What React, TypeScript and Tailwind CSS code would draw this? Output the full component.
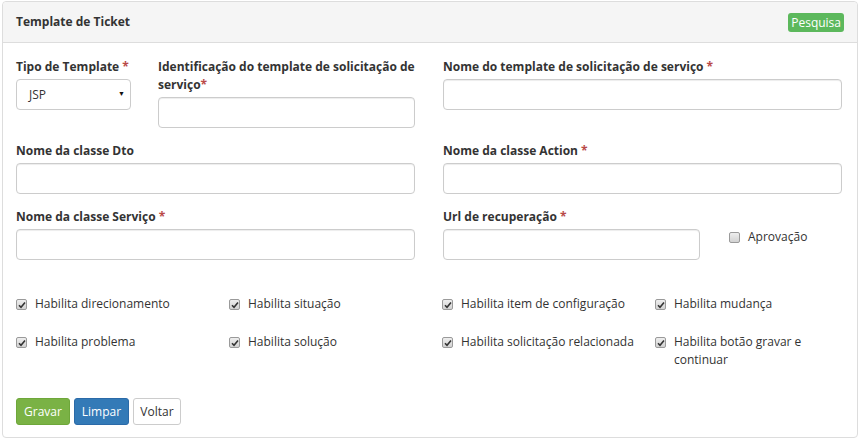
import React from "react";

const Req = () => <span className="text-[#b94a48]">*</span>;

function Label({ children }: { children: React.ReactNode }) {
  return (
    <label className="block font-bold text-[12px] leading-[18px] text-[#333] mb-[3px]">
      {children}
    </label>
  );
}

function TextInput({ className = "" }: { className?: string }) {
  return (
    <input
      type="text"
      className={`block h-[31px] w-full rounded-[4px] border border-[#ccc] bg-white px-3 text-[12px] shadow-[inset_0_1px_1px_rgba(0,0,0,0.075)] outline-none ${className}`}
    />
  );
}

function Check({
  checked = true,
  label,
  nowrap = false,
}: {
  checked?: boolean;
  label: string;
  nowrap?: boolean;
}) {
  return (
    <div className="flex items-start gap-[8px]">
      <span className="mt-[4px] flex h-[11px] w-[11px] shrink-0 items-center justify-center rounded-[2px] border border-[#9a9a9a] bg-gradient-to-b from-[#eeeeee] to-[#d2d2d2]">
        {checked && (
          <svg width="8" height="8" viewBox="0 0 8 8">
            <path d="M1 4.2 L3 6.2 L7 1.5" fill="none" stroke="#333" strokeWidth="1.6" />
          </svg>
        )}
      </span>
      <span className={`text-[12px] leading-[18px] text-[#333] ${nowrap ? "whitespace-nowrap" : ""}`}>
        {label}
      </span>
    </div>
  );
}

export default function App() {
  return (
    <div className="w-[861px] h-[439px] bg-white pt-[1px] pl-[2px] pr-[3px] font-['Open_Sans',sans-serif]">
      <div className="rounded-[4px] border border-[#ddd] bg-white h-[437px]">
        <div className="flex h-[41px] items-center justify-between border-b border-[#ddd] bg-[#f5f5f5] rounded-t-[4px] pl-[13px] pr-[13px]">
          <span className="font-bold text-[12px] text-[#333]">Template de Ticket</span>
          <button className="h-[19px] rounded-[3px] bg-[#5cb85c] px-[3px] text-[12px] leading-[19px] text-white">
            Pesquisa
          </button>
        </div>

        <div className="px-[13px] pt-[15px]">
          <div className="grid grid-cols-[399px_399px] gap-x-[28px]">
            <div className="flex gap-[27px]">
              <div className="w-[115px] shrink-0">
                <Label>
                  Tipo de Template <Req />
                </Label>
                <div className="relative flex h-[31px] items-center rounded-[4px] border border-[#ccc] bg-white pl-[12px] text-[12px] text-[#333]">
                  JSP
                  <span className="absolute right-[5px] top-[9px] text-[7px] text-[#111]">▼</span>
                </div>
              </div>
              <div className="flex-1">
                <Label>
                  Identificação do template de solicitação de serviço<Req />
                </Label>
                <TextInput />
              </div>
            </div>
            <div>
              <Label>
                Nome do template de solicitação de serviço <Req />
              </Label>
              <TextInput />
            </div>
          </div>

          <div className="mt-[14px] grid grid-cols-[399px_399px] gap-x-[28px]">
            <div>
              <Label>Nome da classe Dto</Label>
              <TextInput />
            </div>
            <div>
              <Label>
                Nome da classe Action <Req />
              </Label>
              <TextInput />
            </div>
          </div>

          <div className="mt-[14px] grid grid-cols-[399px_399px] gap-x-[28px]">
            <div>
              <Label>
                Nome da classe Serviço <Req />
              </Label>
              <TextInput />
            </div>
            <div className="flex">
              <div className="w-[257px]">
                <Label>
                  Url de recuperação <Req />
                </Label>
                <TextInput />
              </div>
              <div className="ml-[29px] mt-[20px]">
                <Check checked={false} label="Aprovação" />
              </div>
            </div>
          </div>

          <div className="mt-[35px] grid grid-cols-[184px_184px_184px_184px] gap-x-[29px] gap-y-[20px]">
            <Check label="Habilita direcionamento" />
            <Check label="Habilita situação" />
            <Check label="Habilita item de configuração" nowrap />
            <Check label="Habilita mudança" />
            <Check label="Habilita problema" />
            <Check label="Habilita solução" />
            <Check label="Habilita solicitação relacionada" nowrap />
            <Check label="Habilita botão gravar e continuar" />
          </div>

          <div className="mt-[29px] flex gap-[4px]">
            <button className="h-[27px] w-[54px] rounded-[3px] border border-[#6ea73a] bg-[#7ab245] text-[12px] text-white">
              Gravar
            </button>
            <button className="h-[27px] w-[55px] rounded-[3px] border border-[#2b6aa8] bg-[#337ab7] text-[12px] text-white">
              Limpar
            </button>
            <button className="h-[27px] w-[48px] rounded-[3px] border border-[#ccc] bg-white text-[12px] text-[#333]">
              Voltar
            </button>
          </div>
        </div>
      </div>
    </div>
  );
}
